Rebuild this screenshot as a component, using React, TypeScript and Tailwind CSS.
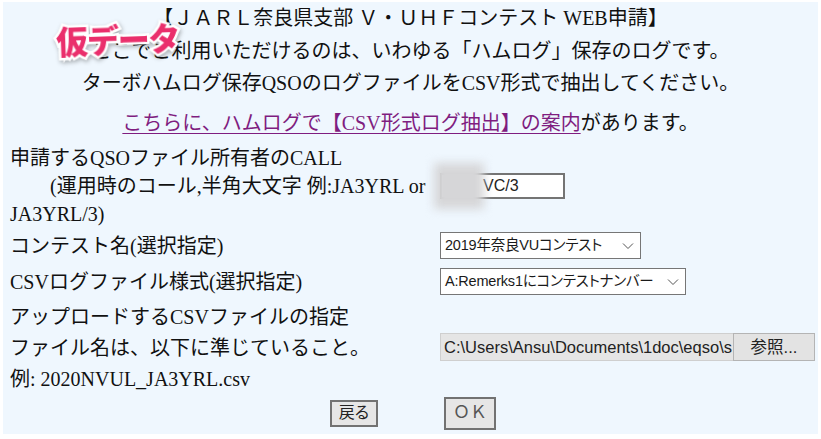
import React from "react";

const serif = "font-['Liberation_Serif','Noto_Sans_CJK_JP',serif]";
const ui = "font-['Liberation_Sans','Noto_Sans_CJK_JP',sans-serif] [font-feature-settings:'palt']";

function Chevron() {
  return (
    <svg width="12" height="8" viewBox="0 0 12 8" className="shrink-0">
      <polyline points="1,1.5 6,6.5 11,1.5" fill="none" stroke="#555" strokeWidth="1" />
    </svg>
  );
}

export default function App() {
  return (
    <div className="bg-white w-[821px] h-[439px] pl-[3px] pt-[2px]">
      <div className={`relative w-[815px] h-[432px] bg-[#eff7fe] text-[#111] text-[20px] ${serif}`}>
        {/* watermark */}
        <div className="absolute left-[53px] top-[20px] -rotate-2 text-[32px] font-black text-[#ea2f6c] font-['Noto_Sans_CJK_JP',sans-serif] [font-feature-settings:'palt'] [-webkit-text-stroke:5px_white] [paint-order:stroke_fill] [filter:drop-shadow(1px_2px_2px_rgba(0,0,0,0.3))] leading-none z-10">
          仮データ
        </div>

        <div className="text-center">
          <div className="leading-[32.5px]">【ＪＡＲＬ奈良県支部 Ｖ・ＵＨＦコンテスト WEB申請】</div>
          <div className="leading-[32.5px]">ここでご利用いただけるのは、いわゆる「ハムログ」保存のログです。</div>
          <div className="leading-[32.5px]">ターボハムログ保存QSOのログファイルをCSV形式で抽出してください。</div>
          <div className="leading-[32px] mt-[7px]">
            <span className="text-[#7f1d80] underline decoration-1 underline-offset-[3px]">こちらに、ハムログで【CSV形式ログ抽出】の案内</span>
            があります。
          </div>
        </div>

        <div className="grid grid-cols-[437px_1fr] mt-[5px]">
          {/* row 1 */}
          <div className="pl-[7px] leading-[28px]">
            <div>申請するQSOファイル所有者のCALL</div>
            <div className="pl-[40px] whitespace-nowrap">(運用時のコール,半角大文字 例:JA3YRL or</div>
            <div>JA3YRL/3)</div>
          </div>
          <div className="flex items-center">
            <div className="relative">
              <div className="w-[125px] h-[26px] border-2 border-[#747474] bg-white flex items-center pl-[41px] text-[16px] font-['Liberation_Sans',sans-serif] text-[#222]">
                VC/3
              </div>
              <div className="absolute left-[-6px] top-[-10px] w-[50px] h-[46px] bg-[#d6d6d8] blur-[5px]" />
            </div>
          </div>

          {/* row 2 */}
          <div className="pl-[7px] h-[36px] flex items-center">コンテスト名(選択指定)</div>
          <div className="flex items-center">
            <div className={`w-[201px] h-[27px] border border-[#767676] bg-white flex items-center justify-between pl-[4px] pr-[6px] text-[14.5px] text-[#1a1a1a] ${ui}`}>
              <span className="whitespace-nowrap tracking-[-0.2px]">2019年奈良VUコンテスト</span>
              <Chevron />
            </div>
          </div>

          {/* row 3 */}
          <div className="pl-[7px] h-[36px] flex items-center">CSVログファイル様式(選択指定)</div>
          <div className="flex items-center">
            <div className={`w-[246px] h-[27px] border border-[#767676] bg-white flex items-center justify-between pl-[4px] pr-[6px] text-[14.5px] text-[#1a1a1a] ${ui}`}>
              <span className="whitespace-nowrap tracking-[-0.2px]">A:Remerks1にコンテストナンバー</span>
              <Chevron />
            </div>
          </div>

          {/* row 4 */}
          <div className="pl-[7px] leading-[31px] pt-[2px]">
            <div>アップロードするCSVファイルの指定</div>
            <div>ファイル名は、以下に準じていること。</div>
            <div>例: 2020NVUL_JA3YRL.csv</div>
          </div>
          <div className="flex items-center">
            <div className={`flex h-[28px] text-[16.5px] ${ui}`}>
              <div className="w-[293px] bg-[#e5e5e5] border border-[#cfcfcf] border-r-0 overflow-hidden whitespace-nowrap flex items-center pl-[3px] text-[#222]">
                C:\Users\Ansu\Documents\1doc\eqso\s
              </div>
              <div className="w-[82px] bg-[#e3e3e3] border border-[#b4b4b4] flex items-center justify-center text-[#222]">
                参照...
              </div>
            </div>
          </div>
        </div>

        {/* buttons */}
        <div className={`flex items-center mt-[2px] pl-[327px] gap-[66px] ${ui}`}>
          <div className="w-[48px] h-[27px] border-2 border-[#727272] bg-[#e6e6e6] flex items-center justify-center text-[16px] text-[#222]">
            戻る
          </div>
          <div className="w-[52px] h-[33px] border-2 border-[#727272] bg-[#e6e6e6] flex items-center justify-center text-[17px] text-[#555] [font-feature-settings:normal]">
            ＯＫ
          </div>
        </div>
      </div>
    </div>
  );
}
